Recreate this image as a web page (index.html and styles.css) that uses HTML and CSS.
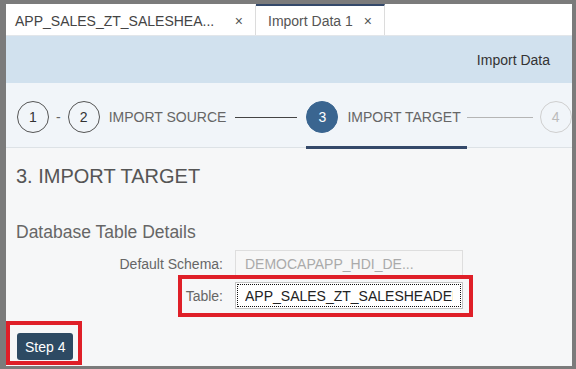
FILE: index.html
```html
<!DOCTYPE html>
<html lang="en">
<head>
  <meta charset="UTF-8">
  <title>Import Data 1</title>
  <link rel="stylesheet" href="styles.css">
</head>
<body>
  <div class="frame">
    <div class="tabs">
      <div class="tab tab-file">
        <span>APP_SALES_ZT_SALESHEA...</span>
        <span class="close">×</span>
      </div>
      <div class="tab active">
        <span>Import Data 1</span>
        <span class="close">×</span>
      </div>
    </div>

    <div class="header">Import Data</div>

    <div class="wizard">
      <div class="step"><span class="num">1</span></div>
      <span class="dash">-</span>
      <div class="step">
        <span class="num">2</span>
        <span class="step-label">IMPORT SOURCE</span>
      </div>
      <span class="connector"></span>
      <div class="step current">
        <span class="num">3</span>
        <span class="step-label">IMPORT TARGET</span>
      </div>
      <span class="connector todo"></span>
      <div class="step todo"><span class="num">4</span></div>
    </div>

    <div class="content">
      <h1 class="title">3. IMPORT TARGET</h1>
      <h2 class="subtitle">Database Table Details</h2>

      <div class="row">
        <label class="label">Default Schema:</label>
        <div class="field readonly">DEMOCAPAPP_HDI_DE...</div>
      </div>
      <div class="row">
        <label class="label" for="table">Table:</label>
        <input id="table" class="field focused" type="text" value="APP_SALES_ZT_SALESHEADER">
      </div>

      <button class="btn">Step 4</button>
    </div>

    <!-- screenshot annotations -->
    <div class="mark mark-table"></div>
    <div class="mark mark-step"></div>
  </div>
</body>
</html>
```

FILE: styles.css
```css
* {
  box-sizing: border-box;
}
body {
  margin: 0;
  font-family: "Liberation Sans", Arial, sans-serif;
  font-size: 14px;
  color: #333;
}
.frame {
  position: relative;
  width: 576px;
  height: 369px;
  border-style: solid;
  border-color: #7b7b7b;
  border-width: 4px 4px 3px 6px;
  background-color: #f6f7f8;
  overflow: hidden;
  display: flex;
  flex-direction: column;
}

/* tabs */
.tabs {
  display: flex;
  height: 32px;
  flex-shrink: 0;
  background-color: #fff;
  border-bottom: 1px solid #e2e6ea;
}
.tab {
  display: flex;
  align-items: center;
  justify-content: space-between;
  border-right: 1px solid #dcdcdc;
  border-top: 2px solid transparent;
  color: #444;
}
.tab-file {
  width: 250px;
  padding: 0 12px 0 9px;
}
.tab.active {
  width: 129px;
  padding: 0 12px;
  border-top-color: #34496a;
  color: #555;
}
.close {
  font-size: 14px;
  color: #555;
}

/* header band */
.header {
  height: 47px;
  flex-shrink: 0;
  display: flex;
  align-items: center;
  justify-content: flex-end;
  padding-right: 22px;
  background-color: #d1e1ee;
  color: #333;
}

/* wizard */
.wizard {
  height: 65px;
  flex-shrink: 0;
  display: flex;
  align-items: center;
  padding-left: 11px;
  padding-top: 4px;
  background-color: #f1f5f9;
  border-bottom: 1px solid #dde2e6;
  white-space: nowrap;
}
.step {
  position: relative;
  display: flex;
  align-items: center;
  gap: 9px;
  flex-shrink: 0;
}
.num {
  width: 32px;
  height: 32px;
  border-radius: 50%;
  border: 1px solid #555;
  display: flex;
  align-items: center;
  justify-content: center;
  color: #333;
  font-size: 14px;
}
.step-label {
  color: #666;
  font-size: 14px;
}
.dash {
  margin: 0 7px;
  color: #666;
}
.connector {
  width: 62px;
  height: 1px;
  margin: 0 9px;
  background-color: #444;
  flex-shrink: 0;
}
.connector.todo {
  width: 66px;
  margin: 0 7px 0 6px;
  background-color: #b5b5b5;
}
.step.current .num {
  background-color: #3a6590;
  border-color: #3a6590;
  color: #fff;
}
.step.current::after {
  content: "";
  position: absolute;
  left: 0;
  right: -6px;
  bottom: -16px;
  height: 3px;
  background-color: #34496a;
}
.step.todo .num {
  border-color: #cfcfcf;
  color: #bbb;
}

/* content */
.content {
  flex: 1;
  padding-left: 10px;
}
.title {
  margin: 16px 0 0;
  font-size: 20px;
  line-height: 24px;
  font-weight: normal;
  color: #555;
}
.subtitle {
  margin: 34px 0 7px;
  font-size: 17.5px;
  line-height: 21px;
  font-weight: normal;
  color: #666;
}
.row {
  display: flex;
  align-items: center;
  margin-bottom: 5px;
}
.label {
  width: 207px;
  margin-right: 12px;
  text-align: right;
  color: #666;
}
.field {
  width: 228px;
  height: 27px;
  padding: 0 9px;
  font-family: "Liberation Sans", Arial, sans-serif;
  font-size: 14px;
}
.field.readonly {
  display: flex;
  align-items: center;
  border: 1px solid #dedede;
  background-color: #f7f7f7;
  color: #aaa;
}
.field.focused {
  border: 1px solid #c4c4c4;
  background-color: #fff;
  color: #222;
  outline: 1px dotted #111;
  outline-offset: -3px;
}
.btn {
  margin-top: 19px;
  margin-left: 1px;
  height: 27px;
  padding: 0 8px;
  border: none;
  border-radius: 3px;
  background-color: #2d4a63;
  color: #fff;
  font-family: "Liberation Sans", Arial, sans-serif;
  font-size: 14px;
}

/* red highlight boxes */
.mark {
  position: absolute;
  border: 4px solid #df1f28;
}
.mark-table {
  left: 172px;
  top: 271px;
  width: 295px;
  height: 42px;
}
.mark-step {
  left: 0;
  top: 317px;
  width: 76px;
  height: 44px;
}
```
